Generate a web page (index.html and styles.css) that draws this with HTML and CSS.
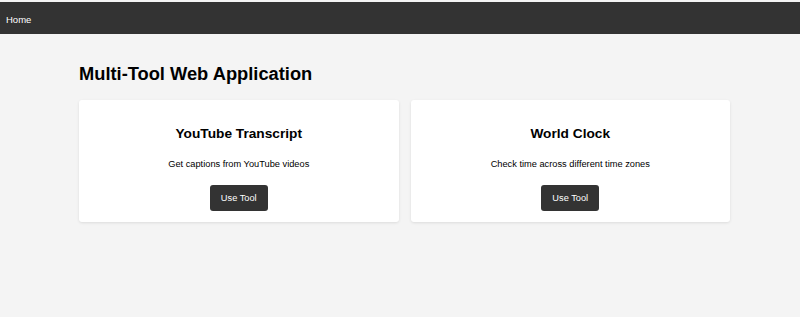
FILE: index.html
```html
<!DOCTYPE html>
<html lang="en">
<head>
<meta charset="utf-8">
<title>Multi-Tool Web Application</title>
<link rel="stylesheet" href="styles.css">
</head>
<body>
<nav class="navbar">
  <a class="nav-link" href="#">Home</a>
</nav>
<main class="container">
  <h1 class="page-title">Multi-Tool Web Application</h1>
  <div class="tool-grid">
    <div class="tool-card">
      <h2 class="tool-title">YouTube Transcript</h2>
      <p class="tool-desc">Get captions from YouTube videos</p>
      <a class="tool-btn" href="#">Use Tool</a>
    </div>
    <div class="tool-card">
      <h2 class="tool-title">World Clock</h2>
      <p class="tool-desc">Check time across different time zones</p>
      <a class="tool-btn" href="#">Use Tool</a>
    </div>
  </div>
</main>
</body>
</html>
```
FILE: styles.css
```css
html, body {
  margin: 0;
  padding: 0;
}
body {
  background: #f4f4f4;
  font-family: "Liberation Sans", Arial, Helvetica, sans-serif;
  color: #000;
  padding-top: 2px;
  min-height: 317px;
  box-sizing: border-box;
}
.navbar {
  background: #333;
  height: 32px;
  display: flex;
  align-items: center;
  padding: 0 6px;
}
.nav-link {
  color: #fff;
  text-decoration: none;
  font-size: 9.5px;
  line-height: 11px;
  margin-top: 2px;
}
.container {
  width: 651px;
  margin: 0 0 0 79px;
  padding-top: 28.5px;
}
.page-title {
  margin: 0 0 16.5px 0;
  font-size: 18.3px;
  line-height: 21px;
  font-weight: bold;
}
.tool-grid {
  display: grid;
  grid-template-columns: 1fr 1fr;
  gap: 12px;
}
.tool-card {
  background: #fff;
  border-radius: 3px;
  box-shadow: 0 1px 3px rgba(0,0,0,0.1);
  padding: 26px 11px 11px;
  display: flex;
  flex-direction: column;
  align-items: center;
  text-align: center;
}
.tool-title {
  margin: 0;
  font-size: 13.7px;
  line-height: 16px;
  font-weight: bold;
}
.tool-desc {
  margin: 17px 0 15px;
  font-size: 9.25px;
  line-height: 11px;
}
.tool-btn {
  display: inline-block;
  background: #333;
  color: #fff;
  text-decoration: none;
  font-size: 9.25px;
  line-height: 11px;
  padding: 7.5px 11px;
  border-radius: 3px;
}
```
